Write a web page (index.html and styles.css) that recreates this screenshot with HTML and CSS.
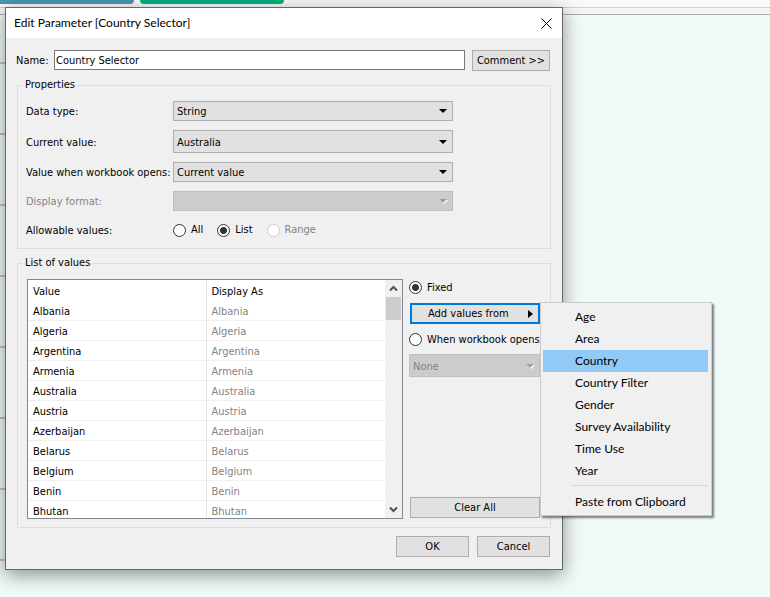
FILE: index.html
```html
<!DOCTYPE html>
<html lang="en">
<head>
    <meta charset="UTF-8">
    <meta name="viewport" content="width=device-width, initial-scale=1.0">
    <title>Edit Parameter [Country Selector]</title>
    <link rel="stylesheet" href="styles.css">
</head>
<body>
    <!-- workbook behind the dialog -->
    <div class="workbook">
        <div class="shelf">
            <span class="pill blue"></span>
            <span class="pill green"></span>
        </div>
        <div class="shelf-edge"></div>
        <div class="sheet"></div>
    </div>

    <form class="dialog" role="dialog" aria-labelledby="dialogTitle">
        <div class="title-bar">
            <h1 id="dialogTitle">Edit Parameter [Country Selector]</h1>
            <button type="button" class="close" aria-label="Close">
                <svg width="11" height="11" viewBox="0 0 11 11"><path d="M0.5 0.5L10.5 10.5M10.5 0.5L0.5 10.5" stroke="#000" fill="none"/></svg>
            </button>
        </div>

        <div class="name-row">
            <label for="name">Name:</label>
            <input type="text" id="name" value="Country Selector">
            <button type="button" class="btn comment">Comment &gt;&gt;</button>
        </div>

        <fieldset class="group">
            <legend>Properties</legend>
            <div class="properties">
                <label for="dataType">Data type:</label>
                <div class="select"><select id="dataType"><option>String</option></select></div>

                <label for="currentValue">Current value:</label>
                <div class="select tall"><select id="currentValue"><option>Australia</option></select></div>

                <label for="whenOpens">Value when workbook opens:</label>
                <div class="select"><select id="whenOpens"><option>Current value</option></select></div>

                <label for="format" class="off">Display format:</label>
                <div class="select disabled"><select id="format" disabled><option></option></select></div>

                <span id="allowable">Allowable values:</span>
                <div class="radios" role="radiogroup" aria-labelledby="allowable">
                    <label class="radio"><input type="radio" name="allow">All</label>
                    <label class="radio"><input type="radio" name="allow" checked>List</label>
                    <label class="radio off"><input type="radio" name="allow" disabled>Range</label>
                </div>
            </div>
        </fieldset>

        <fieldset class="group">
            <legend>List of values</legend>
            <div class="values">
                <div class="list">
                    <div class="list-view">
                        <table>
                            <thead>
                                <tr><th>Value</th><th>Display As</th></tr>
                            </thead>
                            <tbody>
                                <tr><td>Albania</td><td>Albania</td></tr>
                                <tr><td>Algeria</td><td>Algeria</td></tr>
                                <tr><td>Argentina</td><td>Argentina</td></tr>
                                <tr><td>Armenia</td><td>Armenia</td></tr>
                                <tr><td>Australia</td><td>Australia</td></tr>
                                <tr><td>Austria</td><td>Austria</td></tr>
                                <tr><td>Azerbaijan</td><td>Azerbaijan</td></tr>
                                <tr><td>Belarus</td><td>Belarus</td></tr>
                                <tr><td>Belgium</td><td>Belgium</td></tr>
                                <tr><td>Benin</td><td>Benin</td></tr>
                                <tr><td>Bhutan</td><td>Bhutan</td></tr>
                            </tbody>
                        </table>
                    </div>
                    <div class="scrollbar">
                        <button type="button" aria-label="Scroll up">
                            <svg width="9" height="7" viewBox="0 0 9 7"><path d="M1 5.5L4.5 2L8 5.5" stroke="#505050" stroke-width="2" fill="none"/></svg>
                        </button>
                        <div class="thumb"></div>
                        <button type="button" class="down" aria-label="Scroll down">
                            <svg width="9" height="7" viewBox="0 0 9 7"><path d="M1 1.5L4.5 5L8 1.5" stroke="#505050" stroke-width="2" fill="none"/></svg>
                        </button>
                    </div>
                </div>

                <div class="source">
                    <label class="radio"><input type="radio" name="source" checked>Fixed</label>
                    <div class="add-values">
                        <button type="button" class="btn add" aria-haspopup="menu" aria-expanded="true">
                            <span>Add values from</span>
                            <svg width="5" height="8" viewBox="0 0 5 8"><path d="M0 0L5 4L0 8Z"/></svg>
                        </button>
                        <div class="menu" role="menu">
                            <button type="button" role="menuitem">Age</button>
                            <button type="button" role="menuitem">Area</button>
                            <button type="button" role="menuitem" class="active">Country</button>
                            <button type="button" role="menuitem">Country Filter</button>
                            <button type="button" role="menuitem">Gender</button>
                            <button type="button" role="menuitem">Survey Availability</button>
                            <button type="button" role="menuitem">Time Use</button>
                            <button type="button" role="menuitem">Year</button>
                            <hr>
                            <button type="button" role="menuitem">Paste from Clipboard</button>
                        </div>
                    </div>
                    <label class="radio"><input type="radio" name="source">When workbook opens</label>
                    <div class="select tall disabled"><select disabled aria-label="Field"><option>None</option></select></div>
                    <button type="button" class="btn clear">Clear All</button>
                </div>
            </div>
        </fieldset>

        <div class="actions">
            <button type="button" class="btn">OK</button>
            <button type="button" class="btn">Cancel</button>
        </div>
    </form>
</body>
</html>
```
FILE: styles.css
```css
* {
    box-sizing: border-box;
}
body {
    margin: 0;
    padding: 7px 207px 0 5px;
    min-height: 100vh;
    background-color: #f0faf9;
    font-family: Tahoma, "DejaVu Sans Condensed", "DejaVu Sans", sans-serif;
    font-size: 11px;
    line-height: 14px;
    color: #000;
}
button, input, select {
    font: inherit;
    color: inherit;
    margin: 0;
}

/* workbook */
.workbook {
    position: absolute;
    inset: 0;
    z-index: -1;
    display: flex;
    flex-direction: column;
    overflow: hidden;
}
.shelf {
    display: flex;
    gap: 6px;
    height: 7px;
    background-color: #f9f9f9;
}
.pill {
    height: 4px;
    width: 144px;
    border-radius: 0 0 8px 8px;
}
.pill.blue {
    width: 134px;
    background-color: #4996b2;
    border-radius: 0 0 8px 0;
}
.pill.green {
    background-color: #00b180;
}
.shelf-edge {
    height: 8px;
    background-color: #f5f4f4;
    border-top: 1px solid #d0d0d0;
    border-bottom: 1px solid #ababab;
}
.sheet {
    flex: 1;
    width: 5px;
    background: repeating-linear-gradient(transparent 0 47px, #c8c0c2 47px 49px, transparent 49px 71px);
}

/* dialog */
.dialog {
    background-color: #f0f0f0;
    border: 1px solid #636766;
    box-shadow: 0 5px 18px rgba(0, 0, 0, 0.42);
    padding-bottom: 12px;
}
.title-bar {
    display: flex;
    align-items: center;
    justify-content: space-between;
    height: 30px;
    padding: 0 10px 0 8px;
    background-color: #fff;
}
.title-bar h1 {
    margin: 0;
    font-family: "Segoe UI", Lato, sans-serif;
    font-size: 12px;
    font-weight: normal;
}
.close {
    display: flex;
    padding: 0;
    border: none;
    background: none;
}
.name-row {
    display: flex;
    align-items: flex-start;
    padding: 12px 12px 0 10px;
    margin-bottom: 7px;
}
.name-row label {
    width: 38px;
    line-height: 21px;
    white-space: nowrap;
}
.name-row input {
    flex: 1;
    min-width: 0;
    height: 20px;
    padding: 1px 1px 0;
    border: 1px solid #7a7a7a;
    background-color: #fff;
}
.btn {
    height: 21px;
    padding: 1px 0 0;
    border: 1px solid #adadad;
    background-color: #e1e1e1;
    white-space: nowrap;
}
.comment {
    width: 78px;
    margin-left: 7px;
}
.group {
    min-width: 0;
    margin: 0 11px 7px;
    padding: 9px 10px 8px 8px;
    border: 1px solid #dcdcdc;
}
.group legend {
    margin-left: -3px;
    padding: 0 2px;
}
.off {
    color: #838383;
}

/* properties */
.properties {
    display: grid;
    grid-template-columns: 147px minmax(0, 280px);
    row-gap: 9px;
    align-items: center;
    white-space: nowrap;
}
.properties > label, .properties > span {
    padding-top: 2px;
}
.select {
    position: relative;
    display: flex;
    height: 20px;
}
.select.tall {
    height: 23px;
}
.select select {
    appearance: none;
    width: 100%;
    padding: 2px 3px 0;
    border: 1px solid #adadad;
    border-radius: 0;
    background-color: #e1e1e1;
    opacity: 1;
}
.select::after {
    content: "";
    position: absolute;
    right: 6px;
    top: 50%;
    margin-top: -2px;
    border: 4px solid transparent;
    border-top-color: #000;
    border-bottom: none;
    pointer-events: none;
}
.select.disabled select {
    color: #838383;
    background-color: #ccc;
    border-color: #bfbfbf;
}
.select.disabled::after {
    border-top-color: #a0a0a0;
    filter: drop-shadow(1px 1px 0 #fff);
}
.radios {
    display: flex;
    gap: 14px;
    height: 20px;
}
.radio {
    display: flex;
    align-items: center;
    gap: 5px;
    white-space: nowrap;
}
.radio input {
    appearance: none;
    flex: none;
    width: 13px;
    height: 13px;
    border: 1px solid #333;
    border-radius: 50%;
    background-color: #fff;
}
.radio input:checked {
    background-image: radial-gradient(circle, #333 3px, transparent 4px);
}
.radio input:disabled {
    border-color: #ccc;
}

/* list of values */
.values {
    display: flex;
    gap: 6px;
    padding-left: 1px;
}
.list {
    flex: 1;
    min-width: 0;
    display: flex;
    height: 240px;
    border: 1px solid #828790;
    background-color: #fff;
}
.list-view {
    flex: 1;
    overflow: hidden;
}
.list table {
    width: 100%;
    table-layout: fixed;
    border-collapse: separate;
    border-spacing: 0;
}
.list th, .list td {
    height: 20px;
    padding: 2px 5px 0;
    text-align: left;
    font-weight: normal;
    border-bottom: 1px solid #f0f0f0;
}
.list th {
    height: 21px;
    border-bottom: none;
}
.list th:first-child, .list td:first-child {
    border-right: 1px solid #e5e5e5;
}
.list td:last-child {
    color: #838383;
}
.scrollbar {
    display: flex;
    flex-direction: column;
    width: 17px;
    padding: 0 1px;
    background-color: #f0f0f0;
}
.scrollbar button {
    display: flex;
    align-items: center;
    justify-content: center;
    height: 17px;
    padding: 0;
    border: none;
    background: none;
}
.scrollbar .down {
    margin-top: auto;
}
.thumb {
    height: 23px;
    background-color: #cdcdcd;
}
.source {
    display: flex;
    flex-direction: column;
    width: 131px;
    padding-bottom: 1px;
}
.source .radio {
    height: 17px;
}
.add-values {
    position: relative;
    display: flex;
    margin: 7px 0 7px 1px;
}
.add {
    flex: 1;
    display: flex;
    align-items: center;
    justify-content: space-between;
    padding: 0 5px 0 16px;
    border: 2px solid #0078d7;
}
.source .select {
    margin-top: 6px;
}
.clear {
    margin: auto 0 0 1px;
}

/* popup menu */
.menu {
    position: absolute;
    left: 100%;
    top: -1px;
    z-index: 1;
    width: 172px;
    padding: 3px 3px 2px 2px;
    border: 1px solid #ccc;
    background-color: #f0f0f0;
    box-shadow: 2px 2px 2px rgba(0, 0, 0, 0.5);
}
.menu button {
    display: block;
    width: 100%;
    height: 22px;
    padding: 0 0 0 32px;
    border: none;
    background: none;
    font-family: "Segoe UI", Lato, sans-serif;
    font-size: 12px;
    text-align: left;
    white-space: nowrap;
}
.menu .active {
    background-color: #91c9f7;
}
.menu hr {
    margin: 3px 0 5px 28px;
    border: none;
    border-top: 1px solid #d7d7d7;
}

.actions {
    display: flex;
    justify-content: flex-end;
    gap: 8px;
    padding: 1px 12px 0;
}
.actions .btn {
    width: 73px;
}
```
